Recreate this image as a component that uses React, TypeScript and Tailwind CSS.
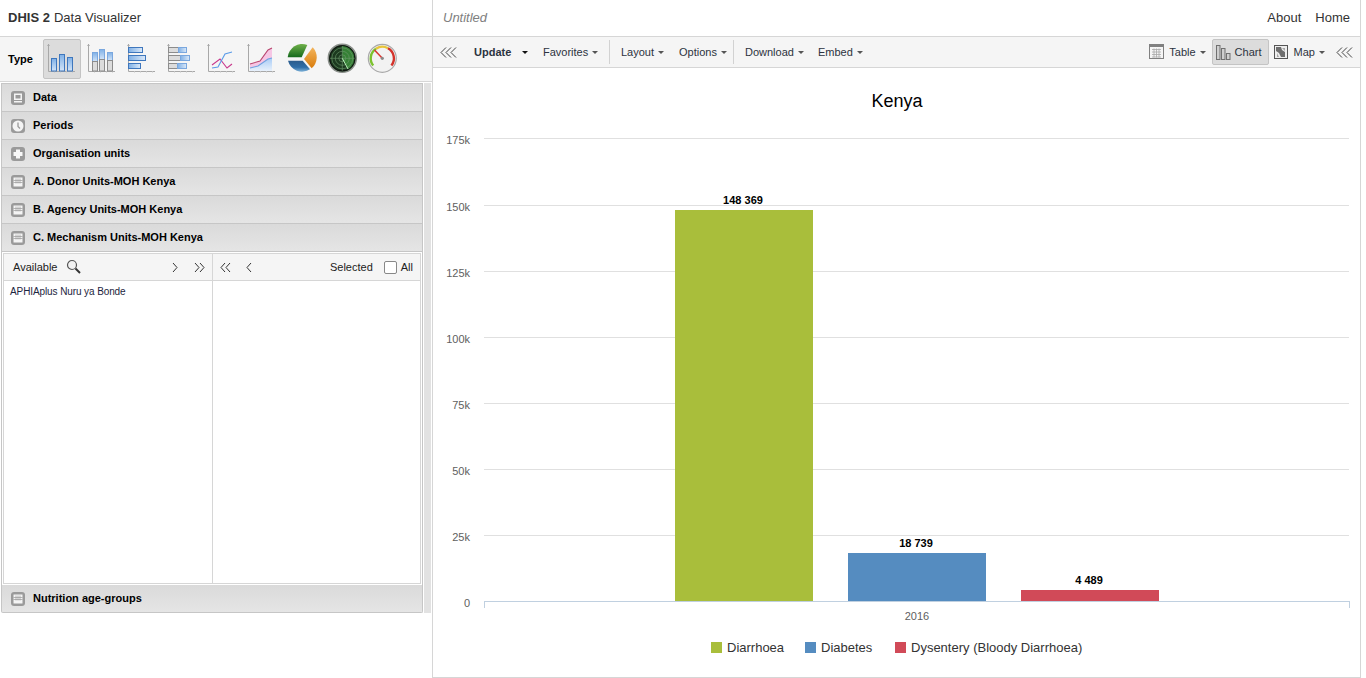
import React from "react";

const font = { fontFamily: '"Liberation Sans", Arial, sans-serif' };

const Axis = () => (
  <g stroke="#a8a8a8" fill="none" strokeWidth="1">
    <path d="M2.5 1v27.5H29" />
    <path d="M1 3l1.5-2L4 3z" fill="#a8a8a8" stroke="none" />
    <path d="M8.5 28v1.5M14.5 28v1.5M20.5 28v1.5M26.5 28v1.5" stroke="#c4c4c4" />
  </g>
);

const BlueDefs = ({ id }: { id: string }) => (
  <defs>
    <linearGradient id={id} x1="0" y1="0" x2="0" y2="1">
      <stop offset="0" stopColor="#7fb0e6" />
      <stop offset="1" stopColor="#d4e5f8" />
    </linearGradient>
  </defs>
);

const ColumnIcon = () => (
  <svg width="32" height="32" viewBox="0 0 32 32">
    <BlueDefs id="c1" />
    <Axis />
    <g fill="url(#c1)" stroke="#3f77bd">
      <rect x="5.5" y="15.5" width="5" height="12.5" />
      <rect x="13.5" y="11.5" width="5" height="16.5" />
      <rect x="21.5" y="14.5" width="5" height="13.5" />
    </g>
  </svg>
);

const StackedColumnIcon = () => (
  <svg width="32" height="32" viewBox="0 0 32 32">
    <BlueDefs id="c2" />
    <Axis />
    <g fill="url(#c2)" stroke="#7aa7de">
      <rect x="6.5" y="9.5" width="5" height="9" />
      <rect x="13.5" y="6.5" width="5" height="10" />
      <rect x="21.5" y="9.5" width="5" height="8" />
    </g>
    <g fill="#dcdcdc" stroke="#8c8c8c">
      <rect x="6.5" y="18.5" width="5" height="9.5" />
      <rect x="13.5" y="16.5" width="5" height="11.5" />
      <rect x="21.5" y="17.5" width="5" height="10.5" />
    </g>
  </svg>
);

const BarIcon = () => (
  <svg width="32" height="32" viewBox="0 0 32 32">
    <defs>
      <linearGradient id="b1" x1="0" y1="0" x2="1" y2="0">
        <stop offset="0" stopColor="#7fb0e6" />
        <stop offset="1" stopColor="#dbe9f9" />
      </linearGradient>
    </defs>
    <Axis />
    <g fill="url(#b1)" stroke="#3f77bd">
      <rect x="2.5" y="4.5" width="14" height="5" />
      <rect x="2.5" y="12.5" width="17" height="5" />
      <rect x="2.5" y="20.5" width="12" height="5" />
    </g>
  </svg>
);

const StackedBarIcon = () => (
  <svg width="32" height="32" viewBox="0 0 32 32">
    <defs>
      <linearGradient id="b2" x1="0" y1="0" x2="1" y2="0">
        <stop offset="0" stopColor="#7fb0e6" />
        <stop offset="1" stopColor="#dbe9f9" />
      </linearGradient>
    </defs>
    <Axis />
    <g fill="#dcdcdc" stroke="#8c8c8c">
      <rect x="2.5" y="4.5" width="10" height="5" />
      <rect x="2.5" y="12.5" width="12" height="5" />
      <rect x="2.5" y="20.5" width="9" height="5" />
    </g>
    <g fill="url(#b2)" stroke="#7aa7de">
      <rect x="12.5" y="4.5" width="8" height="5" />
      <rect x="14.5" y="12.5" width="9" height="5" />
      <rect x="11.5" y="20.5" width="9" height="5" />
    </g>
  </svg>
);

const LineIcon = () => (
  <svg width="32" height="32" viewBox="0 0 32 32">
    <Axis />
    <path d="M6 22l8-6 7 9 5-4" fill="none" stroke="#c8398c" strokeWidth="1.1" />
    <path d="M6 25l6-1 7-13 7-2" fill="none" stroke="#5a9be8" strokeWidth="1.1" />
  </svg>
);

const AreaIcon = () => (
  <svg width="32" height="32" viewBox="0 0 32 32">
    <defs>
      <linearGradient id="a1" x1="0" y1="0" x2="0" y2="1">
        <stop offset="0" stopColor="#a9ccf5" />
        <stop offset="1" stopColor="#e8f1fc" />
      </linearGradient>
    </defs>
    <Axis />
    <path d="M4 21l10-3 8-11 4-2v10l-4 1-10 7-8 2z" fill="#f6c6e4" />
    <path d="M4 25l8-2 10-7 4-1v13H4z" fill="url(#a1)" />
    <path d="M4 21l10-3 8-11 4-2" fill="none" stroke="#b8456f" strokeWidth="1.1" />
    <path d="M4 25l8-2 10-7 4-1" fill="none" stroke="#6fa0e0" strokeWidth="1.1" />
  </svg>
);

const PieIcon = () => (
  <svg width="32" height="32" viewBox="0 0 32 32">
    <defs>
      <linearGradient id="p1" x1="0" y1="0" x2="0" y2="1">
        <stop offset="0" stopColor="#6fb04a" />
        <stop offset="1" stopColor="#15691c" />
      </linearGradient>
      <linearGradient id="p2" x1="0" y1="0" x2="0" y2="1">
        <stop offset="0" stopColor="#f3b45c" />
        <stop offset="1" stopColor="#d97c0c" />
      </linearGradient>
      <linearGradient id="p3" x1="0" y1="0" x2="0" y2="1">
        <stop offset="0" stopColor="#2a5b8c" />
        <stop offset="0.6" stopColor="#2f6ea8" />
        <stop offset="1" stopColor="#7fb2d8" />
      </linearGradient>
    </defs>
    <path d="M1.7 14.3A14.5 14.5 0 0 1 21.3 2L15.7 14.3z" fill="url(#p1)" />
    <path d="M26.7 4.3A14.5 14.5 0 0 1 25.7 25.3L18 16z" fill="url(#p2)" />
    <path d="M2 17.7H16.7L24 26.3A14.5 14.5 0 0 1 2 17.7z" fill="url(#p3)" />
  </svg>
);

const RadarIcon = () => (
  <svg width="32" height="32" viewBox="0 0 32 32">
    <circle cx="16.3" cy="15.3" r="14" fill="#1c3a1f" stroke="#8b8f8b" strokeWidth="1.5" />
    <circle cx="16.3" cy="15.3" r="12.6" fill="none" stroke="#111" strokeWidth="1" />
    <path d="M16.3 15.3V3A12.3 12.3 0 0 1 22 26z" fill="#3f9a3f" opacity="0.75" />
    <g fill="none" stroke="#6f9b6f" strokeWidth="0.6">
      <circle cx="16.3" cy="15.3" r="3.5" />
      <circle cx="16.3" cy="15.3" r="7" />
      <circle cx="16.3" cy="15.3" r="10.5" />
      <path d="M4 15.3h24.6M16.3 3v24.6" />
    </g>
    <path d="M16.3 15.3L22 26" stroke="#b8f0b8" strokeWidth="1" />
  </svg>
);

const GaugeIcon = () => (
  <svg width="32" height="32" viewBox="0 0 32 32">
    <circle cx="16.3" cy="15.3" r="14" fill="#f2f2f2" stroke="#a8a8a8" strokeWidth="1.2" />
    <path d="M7.2 22.5A11.5 11.5 0 0 1 10 5.7" fill="none" stroke="#7cc22e" strokeWidth="2.4" />
    <path d="M10 5.7A11.5 11.5 0 0 1 22 5.3" fill="none" stroke="#e8c53a" strokeWidth="2.4" />
    <path d="M22 5.3A11.5 11.5 0 0 1 25.4 22.5" fill="none" stroke="#d3322a" strokeWidth="2.4" />
    <path d="M16.3 15.3L8.5 7" stroke="#d83a34" strokeWidth="1.6" />
    <circle cx="16.3" cy="15.3" r="1.6" fill="#8a8a8a" />
  </svg>
);

const typeIcons = [ColumnIcon, StackedColumnIcon, BarIcon, StackedBarIcon, LineIcon, AreaIcon, PieIcon, RadarIcon, GaugeIcon];

const DataGlyph = () => (
  <svg width="14" height="14" viewBox="0 0 14 14">
    <rect width="14" height="14" rx="3" fill="#9a9a9a" />
    <rect x="3" y="2.5" width="8" height="6.5" fill="#f4f4f4" />
    <rect x="4.5" y="4" width="5" height="3.5" fill="#9a9a9a" />
    <rect x="3" y="10" width="8" height="1.5" fill="#f4f4f4" />
  </svg>
);

const ClockGlyph = () => (
  <svg width="14" height="14" viewBox="0 0 14 14">
    <rect width="14" height="14" rx="3" fill="#9a9a9a" />
    <circle cx="7" cy="7" r="5.5" fill="#f4f4f4" />
    <path d="M7 3.5V7.5L9 9.5" fill="none" stroke="#9a9a9a" strokeWidth="1.3" />
  </svg>
);

const PlusGlyph = () => (
  <svg width="14" height="14" viewBox="0 0 14 14">
    <rect width="14" height="14" rx="3" fill="#9a9a9a" />
    <path d="M5 2.5h4V5h2.5v4H9v2.5H5V9H2.5V5H5z" fill="#f8f8f8" />
  </svg>
);

const GridGlyph = () => (
  <svg width="14" height="14" viewBox="0 0 14 14">
    <rect width="14" height="14" rx="3" fill="#9a9a9a" />
    <rect x="2.5" y="2.5" width="9" height="9" fill="#f4f4f4" />
    <path d="M2.5 5.5h9M2.5 7.5h9M5 3.5v5M7 3.5v5M9 3.5v5" stroke="#9a9a9a" strokeWidth="0.7" />
  </svg>
);

const Caret = ({ dark }: { dark?: boolean }) => (
  <span className={`inline-block w-0 h-0 border-x-[3px] border-x-transparent border-t-[3px] ${dark ? "border-t-[#111111]" : "border-t-[#555555]"}`} />
);

const TripleChevron = () => (
  <svg width="17" height="11" viewBox="0 0 17 11" fill="none" stroke="#444444" strokeWidth="1">
    <path d="M6 .5L1 5.5l5 5M11 .5L6 5.5l5 5M16 .5L11 5.5l5 5" />
  </svg>
);

const Chevron = ({ dir, double }: { dir: "left" | "right"; double?: boolean }) => {
  const d = dir === "right"
    ? double ? "M1 1l4 4.5L1 10M6 1l4 4.5L6 10" : "M3 1l4 4.5L3 10"
    : double ? "M5 1L1 5.5 5 10M10 1L6 5.5 10 10" : "M7 1L3 5.5 7 10";
  return (
    <svg width="11" height="11" viewBox="0 0 11 11" fill="none" stroke="#333333" strokeWidth="1">
      <path d="M0 0" />
      <path d={d} />
    </svg>
  );
};

const Row = ({ icon, label, last }: { icon: React.ReactNode; label: string; last?: boolean }) => (
  <div className={`flex items-center h-[28px] pl-[9px] bg-linear-to-b from-[#dadada] to-[#e5e5e5] border-x border-b border-[#c6c6c6] ${last ? "rounded-b-[2px]" : ""}`}>
    {icon}
    <span className="ml-[8px] text-[11px] font-bold text-black">{label}</span>
  </div>
);

const MenuItem = ({ label, width, bold }: { label: string; width: string; bold?: boolean }) => (
  <div className={`flex items-center pl-[8px] text-[11px] text-[#2c3340] ${width} ${bold ? "font-bold" : ""}`}>
    <span>{label}</span>
    <span className={`flex ${bold ? "ml-[11px]" : "ml-[4px]"}`}><Caret dark={bold} /></span>
  </div>
);

const Sep = () => <div className="w-px h-[24px] bg-[#d2d2d2] mx-[3px]" />;

const TableGlyph = () => (
  <svg width="16" height="16" viewBox="0 0 16 16">
    <rect x=".5" y=".5" width="14" height="14" fill="#f5f5f5" stroke="#808080" />
    <rect x="1" y="1" width="13" height="2" fill="#808080" />
    <path d="M3 5.5h9M3 8h9M3 10.5h9M3 13h9M5 4.5v9M7.5 4.5v9M10 4.5v9" stroke="#a8a8a8" strokeWidth=".8" />
  </svg>
);

const ChartGlyph = () => (
  <svg width="15" height="15" viewBox="0 0 15 15">
    <rect x=".5" y=".5" width="3.5" height="14" fill="#cfcfcf" stroke="#707070" />
    <rect x="5.5" y="3.5" width="3.5" height="11" fill="#cfcfcf" stroke="#707070" />
    <rect x="10.5" y="8.5" width="3.5" height="6" fill="#cfcfcf" stroke="#707070" />
  </svg>
);

const MapGlyph = () => (
  <svg width="14" height="14" viewBox="0 0 14 14">
    <rect x=".5" y=".5" width="13" height="13" fill="#eeeeee" stroke="#555555" />
    <path d="M2 2h5l1 3 3 2v5H7L5 8 2 6z" fill="#6e6e6e" />
    <path d="M8 3h3v3zM3 8l2 4H3z" fill="#a5a5a5" />
  </svg>
);

const grid = [
  { y: 138, label: "175k" },
  { y: 205, label: "150k" },
  { y: 271, label: "125k" },
  { y: 337, label: "100k" },
  { y: 403, label: "75k" },
  { y: 469, label: "50k" },
  { y: 535, label: "25k" },
  { y: 601, label: "0" },
];

const bars = [
  { x: 675, y: 210, color: "#a9be3b", value: "148 369" },
  { x: 848, y: 553, color: "#558cc0", value: "18 739" },
  { x: 1021, y: 590, color: "#d14a58", value: "4 489" },
];

const legend = [
  { x: 711, color: "#a9be3b", label: "Diarrhoea" },
  { x: 805, color: "#558cc0", label: "Diabetes" },
  { x: 895, color: "#d14a58", label: "Dysentery (Bloody Diarrhoea)" },
];

const Chart = () => (
  <svg width="928" height="609" viewBox="433 68 928 609" className="block" style={font}>
    <text x="897" y="107" textAnchor="middle" fontSize="18" fill="#000000">Kenya</text>
    {grid.map((g) => (
      <g key={g.label}>
        {g.y !== 601 && <line x1="484" x2="1349" y1={g.y + 0.5} y2={g.y + 0.5} stroke="#e0e0e0" />}
        <text x="470" y={g.y + 6} textAnchor="end" fontSize="11" fill="#606060">{g.label}</text>
      </g>
    ))}
    {bars.map((b) => (
      <g key={b.x}>
        <rect x={b.x} y={b.y} width="138" height={601 - b.y} fill={b.color} />
        <text x={b.x + 68} y={b.y - 6} textAnchor="middle" fontSize="11" fontWeight="bold" fill="#000000">{b.value}</text>
      </g>
    ))}
    <line x1="484" x2="1349" y1="601.5" y2="601.5" stroke="#c0d0e0" />
    <path d="M484.5 601v7M1349.5 601v7" stroke="#c0d0e0" />
    <text x="917" y="620" textAnchor="middle" fontSize="11" fill="#606060">2016</text>
    {legend.map((l) => (
      <g key={l.x}>
        <rect x={l.x} y="642" width="11" height="11" fill={l.color} />
        <text x={l.x + 16} y="652" fontSize="13" fill="#333333">{l.label}</text>
      </g>
    ))}
  </svg>
);

export default function App() {
  return (
    <div className="flex w-[1366px] h-[678px] overflow-hidden bg-white" style={font}>
      <div className="w-[433px] h-full border-r border-[#d6d6d6] flex flex-col shrink-0">
        <div className="h-[37px] border-b border-[#d6d6d6] flex items-center pl-[8px] text-[13px] text-[#333333]">
          <span className="font-bold mr-[4px]">DHIS 2</span>
          <span>Data Visualizer</span>
        </div>
        <div className="h-[45px] bg-[#f5f5f5] border-b border-[#d6d6d6] flex items-center">
          <span className="w-[43px] pl-[8px] text-[11px] font-bold text-black">Type</span>
          {typeIcons.map((Icon, i) => (
            <div
              key={i}
              className={`w-[38px] h-[40px] mr-[2px] flex items-center justify-center rounded-[2px] ${i === 0 ? "bg-[#dcdcdc] border border-[#c4c4c4]" : ""}`}
            >
              <Icon />
            </div>
          ))}
        </div>
        <div className="flex pl-px pt-px">
          <div className="w-[422px] flex flex-col border-t border-[#c6c6c6]">
            <Row icon={<DataGlyph />} label="Data" />
            <Row icon={<ClockGlyph />} label="Periods" />
            <Row icon={<PlusGlyph />} label="Organisation units" />
            <Row icon={<GridGlyph />} label="A. Donor Units-MOH Kenya" />
            <Row icon={<GridGlyph />} label="B. Agency Units-MOH Kenya" />
            <Row icon={<GridGlyph />} label="C. Mechanism Units-MOH Kenya" />
            <div className="h-[333px] border-x border-[#c6c6c6] px-px pt-px pb-px">
              <div className="h-full border border-[#d6d6d6] flex text-[11px] text-[#222222]">
                <div className="w-[209px] border-r border-[#d6d6d6] flex flex-col">
                  <div className="h-[27px] bg-[#f5f5f5] border-b border-[#d6d6d6] flex items-center pl-[9px] pr-[7px]">
                    <span>Available</span>
                    <svg width="16" height="16" viewBox="0 0 16 16" className="ml-[9px]" fill="none">
                      <circle cx="6" cy="6" r="4.5" stroke="#555555" strokeWidth="1.2" fill="#f2f2f2" />
                      <path d="M9.5 9.5L14 14" stroke="#333333" strokeWidth="2" />
                    </svg>
                    <span className="ml-auto flex items-center gap-[13px]">
                      <Chevron dir="right" />
                      <Chevron dir="right" double />
                    </span>
                  </div>
                  <div className="pl-[6px] pt-[3px] text-[10px] tracking-[-0.1px] text-[#1c2540]">APHIAplus Nuru ya Bonde</div>
                </div>
                <div className="flex-1">
                  <div className="h-[27px] bg-[#f5f5f5] border-b border-[#d6d6d6] flex items-center pl-[7px] pr-[7px]">
                    <span className="flex items-center gap-[13px]">
                      <Chevron dir="left" double />
                      <Chevron dir="left" />
                    </span>
                    <span className="ml-auto">Selected</span>
                    <span className="ml-[11px] w-[13px] h-[13px] bg-white border border-[#888888] rounded-[2px]" />
                    <span className="ml-[4px]">All</span>
                  </div>
                </div>
              </div>
            </div>
            <Row icon={<GridGlyph />} label="Nutrition age-groups" last />
          </div>
          <div className="w-[7px] ml-px bg-[#e2e2e2]" />
        </div>
      </div>

      <div className="w-[928px] h-full border-r border-b border-[#d6d6d6] flex flex-col shrink-0">
        <div className="h-[37px] border-b border-[#d6d6d6] flex items-center pl-[10px] pr-[10px] text-[13px]">
          <span className="italic text-[#808080]">Untitled</span>
          <span className="ml-auto text-[#333333]">About</span>
          <span className="ml-[14px] text-[#333333]">Home</span>
        </div>
        <div className="h-[31px] bg-[#f5f5f5] border-b border-[#d6d6d6] flex items-center">
          <div className="w-[33px] pl-[7px] flex"><TripleChevron /></div>
          <MenuItem label="Update" width="w-[69px]" bold />
          <MenuItem label="Favorites" width="w-[71px]" />
          <Sep />
          <MenuItem label="Layout" width="w-[58px]" />
          <MenuItem label="Options" width="w-[59px]" />
          <Sep />
          <MenuItem label="Download" width="w-[73px]" />
          <MenuItem label="Embed" width="w-[60px]" />
          <div className="ml-auto flex items-center h-full">
            <TableGlyph />
            <span className="ml-[4px] text-[11px] text-[#2c3340]">Table</span>
            <span className="ml-[4px] flex"><Caret /></span>
            <div className="ml-[6px] w-[57px] h-[26px] bg-[#dcdcdc] border border-[#c4c4c4] rounded-[2px] flex items-center pl-[3px]">
              <ChartGlyph />
              <span className="ml-[4px] text-[11px] text-[#2c3340]">Chart</span>
            </div>
            <span className="ml-[5px] flex"><MapGlyph /></span>
            <span className="ml-[6px] text-[11px] text-[#2c3340]">Map</span>
            <span className="ml-[4px] flex"><Caret /></span>
            <span className="ml-[11px] mr-[7px] flex"><TripleChevron /></span>
          </div>
        </div>
        <Chart />
      </div>
    </div>
  );
}
